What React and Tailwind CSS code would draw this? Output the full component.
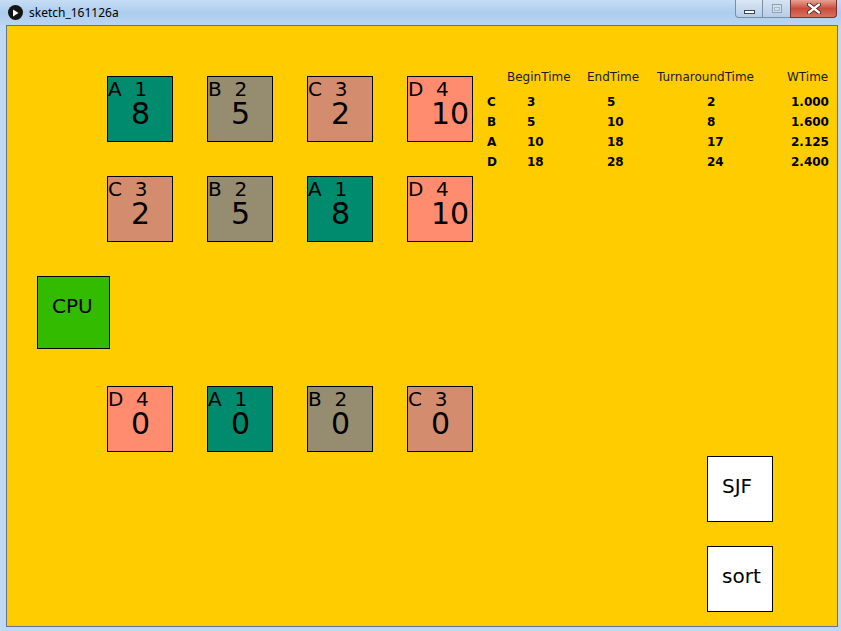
import React from "react";

const COLORS = {
  A: "bg-[#008a6e]",
  B: "bg-[#968c6f]",
  C: "bg-[#d38c6d]",
  D: "bg-[#ff8c6f]",
};

const row1 = [["A", 1, 8], ["B", 2, 5], ["C", 3, 2], ["D", 4, 10]];
const row2 = [["C", 3, 2], ["B", 2, 5], ["A", 1, 8], ["D", 4, 10]];
const row3 = [["D", 4, 0], ["A", 1, 0], ["B", 2, 0], ["C", 3, 0]];

const table = [
  ["C", "3", "5", "2", "1.000"],
  ["B", "5", "10", "8", "1.600"],
  ["A", "10", "18", "17", "2.125"],
  ["D", "18", "28", "24", "2.400"],
];

function Box({ n, p, v }) {
  return (
    <div className={`w-[66px] h-[66px] border border-black text-black ${COLORS[n]}`}>
      <div className="pt-[2px] text-[20px] leading-[20px] whitespace-pre">{`${n}  ${p}`}</div>
      <div className="pl-[23px] text-[30px] leading-[30px] whitespace-pre">{v}</div>
    </div>
  );
}

function Row({ items }) {
  return (
    <div className="flex gap-[34px]">
      {items.map(([n, p, v], i) => (
        <Box key={i} n={n} p={p} v={v} />
      ))}
    </div>
  );
}

function Button({ label }) {
  return (
    <div className="ml-[700px] w-[66px] h-[66px] border border-black bg-white text-black">
      <div className="pt-[19px] pl-[14px] text-[20px] leading-[20px]">{label}</div>
    </div>
  );
}

export default function App() {
  return (
    <div className="w-[841px] h-[631px] overflow-hidden bg-[#bfd9f3] flex flex-col">
      {/* title bar */}
      <div className="h-[25px] flex bg-linear-to-b from-[#c6ddf5] via-[#aecdee] to-[#b9d5f1]">
        <div className="flex items-center pl-[8px] pt-[1px] h-[24px]">
          <div className="w-[15px] h-[15px] rounded-full bg-[#141414] flex items-center justify-center">
            <svg width="7" height="8" viewBox="0 0 7 8">
              <path d="M1 0.5 L6.5 4 L1 7.5 Z" fill="#fff" />
            </svg>
          </div>
          <span className="ml-[6px] text-[12px] leading-[14px] text-black font-['Noto_Sans',sans-serif]">
            sketch_161126a
          </span>
        </div>
        <div className="ml-auto mr-[4px] flex h-[18px]">
          <div className="w-[28px] h-[18px] border border-[#7c8ea3] border-t-0 rounded-bl-[4px] bg-linear-to-b from-[#dbe8f6] to-[#b7cde6] flex items-center justify-center">
            <div className="mt-[6px] w-[11px] h-[4px] bg-white border border-[#39475a]" />
          </div>
          <div className="w-[27px] h-[18px] border-b border-[#7c8ea3] bg-linear-to-b from-[#d6e4f3] to-[#b7cde6] flex items-center justify-center">
            <div className="w-[10px] h-[9px] border border-[#8ea0b5] bg-[#d3dfec] flex items-center justify-center">
              <div className="w-[6px] h-[4px] border border-[#a9b8c9]" />
            </div>
          </div>
          <div className="w-[47px] h-[18px] border border-[#7a3030] border-t-0 rounded-br-[4px] bg-linear-to-b from-[#e8a293] via-[#c94b3c] to-[#d8735f] flex items-center justify-center">
            <svg width="14" height="11" viewBox="0 0 14 11">
              <path d="M2 1.5 L12 9.5 M12 1.5 L2 9.5" stroke="#3b1b16" strokeWidth="4" strokeLinecap="round" />
              <path d="M2 1.5 L12 9.5 M12 1.5 L2 9.5" stroke="#ffffff" strokeWidth="2.4" strokeLinecap="round" />
            </svg>
          </div>
        </div>
      </div>

      {/* canvas */}
      <div className="pl-[6px]">
        <div className="w-[832px] h-[602px] border border-[#62728a]">
          <div className="w-[830px] h-[600px] bg-[#ffcc00] font-['DejaVu_Sans',sans-serif] text-black">
            <div className="flex">
              <div className="pl-[100px] pt-[50px] flex flex-col gap-[34px]">
                <Row items={row1} />
                <Row items={row2} />
              </div>
              <div className="ml-[14px] pt-[41px] text-[12px] leading-[20px]">
                <div className="flex pl-[20px] text-[#1a1a1a]">
                  <span className="w-[80px]">BeginTime</span>
                  <span className="w-[70px]">EndTime</span>
                  <span className="w-[130px]">TurnaroundTime</span>
                  <span>WTime</span>
                </div>
                <div className="mt-[5px] font-bold">
                  {table.map((r) => (
                    <div key={r[0]} className="flex">
                      <span className="w-[40px]">{r[0]}</span>
                      <span className="w-[80px]">{r[1]}</span>
                      <span className="w-[100px]">{r[2]}</span>
                      <span className="w-[84px]">{r[3]}</span>
                      <span>{r[4]}</span>
                    </div>
                  ))}
                </div>
              </div>
            </div>

            <div className="ml-[30px] mt-[34px] w-[73px] h-[73px] border border-black bg-[#33bb00]">
              <div className="pt-[19px] pl-[14px] text-[20px] leading-[20px]">CPU</div>
            </div>

            <div className="ml-[100px] mt-[37px]">
              <Row items={row3} />
            </div>

            <div className="mt-[4px]">
              <Button label="SJF" />
            </div>
            <div className="mt-[24px]">
              <Button label="sort" />
            </div>
          </div>
        </div>
      </div>
    </div>
  );
}
